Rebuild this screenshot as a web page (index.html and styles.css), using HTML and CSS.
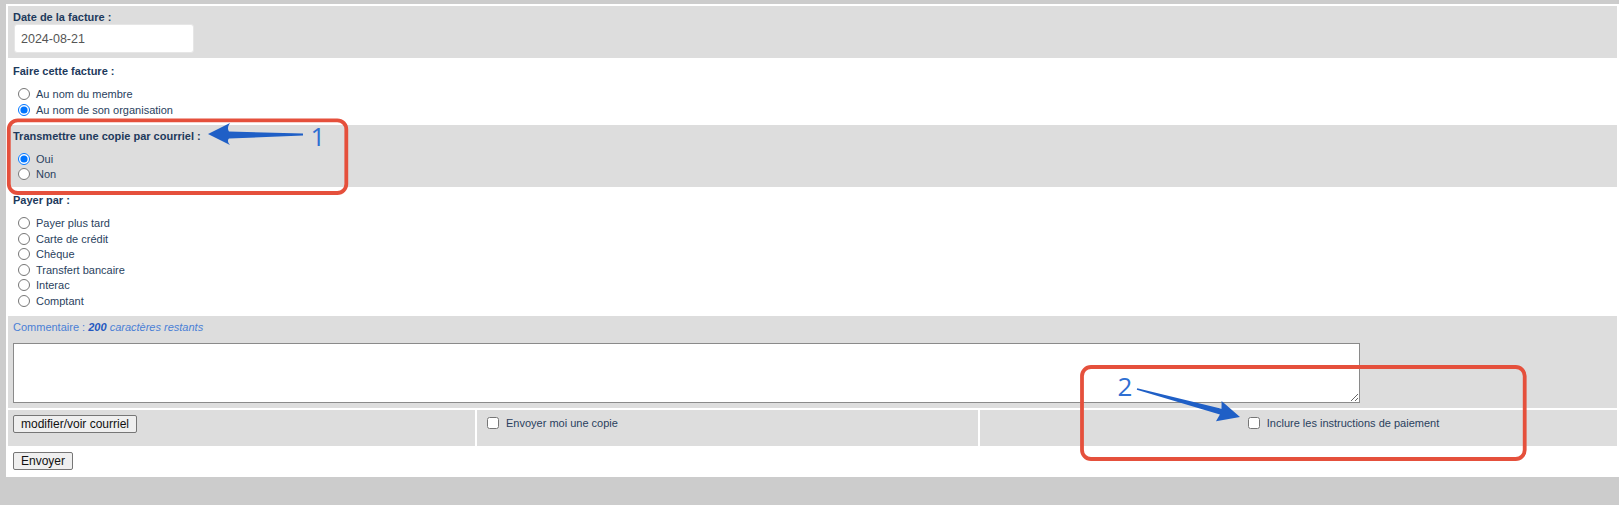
FILE: index.html
```html
<!DOCTYPE html>
<html lang="fr">
<head>
    <meta charset="UTF-8">
    <meta name="viewport" content="width=device-width, initial-scale=1.0">
    <title>Facture</title>
    <link rel="stylesheet" href="styles.css">
</head>
<body>
    <div class="form">
        <div class="row shade">
            <div class="title">Date de la facture :</div>
            <input type="text" class="date-input" value="2024-08-21">
        </div>
        <div class="row">
            <div class="title">Faire cette facture :</div>
            <div class="options">
                <label class="option"><input type="radio" name="nom"> Au nom du membre</label>
                <label class="option"><input type="radio" name="nom" checked> Au nom de son organisation</label>
            </div>
        </div>
        <div class="row shade">
            <div class="title">Transmettre une copie par courriel :</div>
            <div class="options">
                <label class="option"><input type="radio" name="copie" checked> Oui</label>
                <label class="option"><input type="radio" name="copie"> Non</label>
            </div>
        </div>
        <div class="row">
            <div class="title">Payer par :</div>
            <div class="options">
                <label class="option"><input type="radio" name="paiement"> Payer plus tard</label>
                <label class="option"><input type="radio" name="paiement"> Carte de crédit</label>
                <label class="option"><input type="radio" name="paiement"> Chèque</label>
                <label class="option"><input type="radio" name="paiement"> Transfert bancaire</label>
                <label class="option"><input type="radio" name="paiement"> Interac</label>
                <label class="option"><input type="radio" name="paiement"> Comptant</label>
            </div>
        </div>
        <div class="row shade">
            <div class="comment-label">Commentaire : <b>200</b> <i>caractères restants</i></div>
            <textarea class="comment"></textarea>
        </div>
        <div class="actions">
            <div class="cell"><button class="btn">modifier/voir courriel</button></div>
            <div class="cell"><label class="check"><input type="checkbox"> Envoyer moi une copie</label></div>
            <div class="cell center"><label class="check"><input type="checkbox"> Inclure les instructions de paiement</label></div>
        </div>
        <div class="row last">
            <button class="btn">Envoyer</button>
        </div>
    </div>

    <!-- annotations -->
    <svg class="notes" width="1619" height="505" viewBox="0 0 1619 505">
        <rect x="8.8" y="120.3" width="337.5" height="72.7" rx="9" class="box"/>
        <path d="M208,134 L230,123 Q226.5,128 229,131.5 L303,133.6 L303,135.6 L229,138.6 Q226.5,141 230,145 Z" class="arrow"/>
        <text x="318" y="146" class="num">1</text>

        <rect x="1082" y="367" width="442.7" height="92" rx="9" class="box"/>
        <path d="M1240,417 L1221.6,401.1 L1221.5,408.8 L1137.2,388.2 L1136.8,389.8 L1219.9,414.6 L1216,421.3 Z" class="arrow"/>
        <text x="1125" y="396" class="num">2</text>
    </svg>
</body>
</html>
```

FILE: styles.css
```css
html, body {
    margin: 0;
    overflow: hidden;
}
body {
    font-family: "Liberation Sans", Arial, sans-serif;
    font-size: 11px;
    background-color: #cccccc;
    position: relative;
    min-height: 100vh;
}
.form {
    box-sizing: border-box;
    width: calc(100% - 6px);
    margin: 4px 0 0 6px;
    padding: 2px;
    background-color: #fff;
    display: grid;
    gap: 2px;
}
.row {
    padding: 4px 5px 5px;
}
.row.shade {
    background-color: #dddddd;
}
.title {
    font-weight: bold;
    line-height: 14px;
    color: #1d3a5c;
}
.date-input {
    display: block;
    box-sizing: border-box;
    width: 180px;
    height: 29px;
    margin: 0 0 0 1px;
    padding: 0 6px;
    border: 1px solid #e6e6e6;
    border-radius: 3px;
    background: #fff;
    font-family: inherit;
    font-size: 12.5px;
    color: #555;
    outline: none;
}
.options {
    margin-top: 8.5px;
}
.option {
    display: flex;
    align-items: center;
    height: 15.5px;
    color: #2a3f5e;
}
.option input {
    width: 12px;
    height: 12px;
    margin: 0 6px 0 5px;
}
.comment-label {
    line-height: 14px;
    color: #4a80d6;
}
.comment-label b {
    font-style: italic;
    color: #2559c0;
}
.comment {
    display: block;
    box-sizing: border-box;
    width: 1347px;
    height: 60px;
    margin-top: 9.5px;
    border: 1px solid #8a8a8a;
    background: #fff;
}
.actions {
    display: grid;
    grid-template-columns: 467px 501px 1fr;
    gap: 2px;
    height: 36px;
}
.cell {
    background-color: #dddddd;
    padding: 5px;
}
.cell.center {
    text-align: center;
    padding-left: 90px;
}
.check {
    display: inline-flex;
    align-items: center;
    height: 13px;
    margin-top: 1px;
    color: #2a3f5e;
}
.check input {
    width: 12px;
    height: 12px;
    margin: 0 7px 0 5px;
}
.btn {
    box-sizing: border-box;
    height: 18px;
    padding: 0 7px;
    border: 1px solid #767676;
    border-radius: 2px;
    background-color: #efefef;
    font-family: inherit;
    font-size: 12px;
    color: #111;
    line-height: 14px;
}
.notes {
    position: absolute;
    top: 0;
    left: 0;
    pointer-events: none;
}
.notes .box {
    fill: none;
    stroke: #e5503c;
    stroke-width: 3.8;
}
.notes .arrow {
    fill: #1f5fc6;
}
.notes .num {
    font-family: "Open Sans", sans-serif;
    font-size: 26px;
    fill: #2f6fd2;
    text-anchor: middle;
}
```
